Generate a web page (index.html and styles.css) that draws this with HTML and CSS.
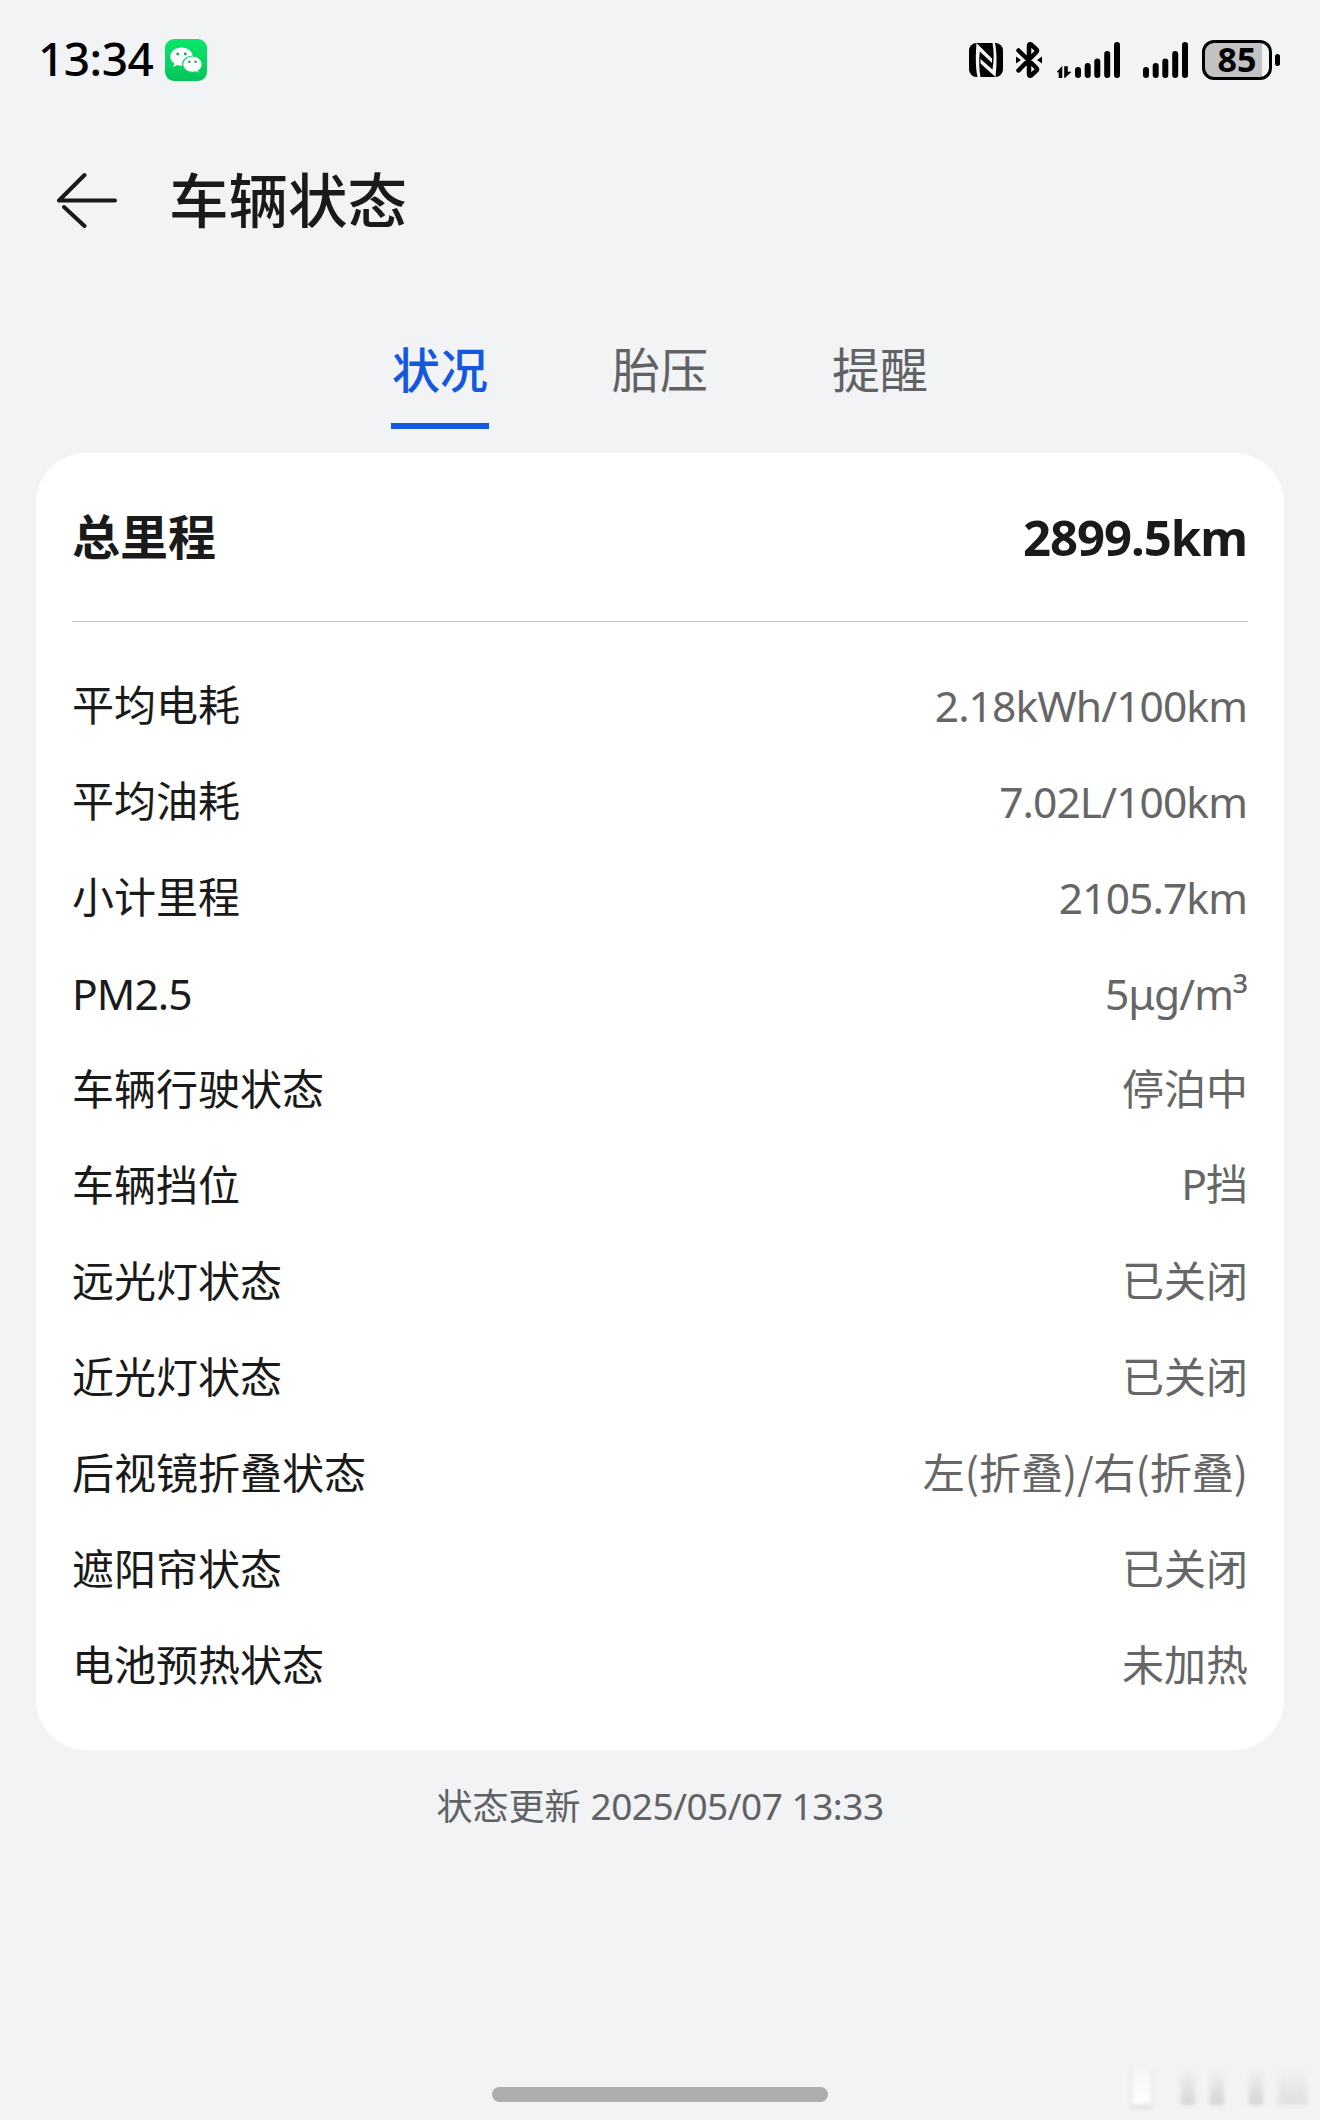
FILE: index.html
```html
<!DOCTYPE html>
<html lang="zh-CN">
<head>
  <meta charset="UTF-8">
  <meta name="viewport" content="width=device-width, initial-scale=1.0">
  <title>车辆状态</title>
  <link rel="stylesheet" href="styles.css">
</head>
<body>
  <div class="status-bar">
    <div class="clock">13:34</div>
    <svg class="wechat" viewBox="0 0 42 42">
      <defs>
        <linearGradient id="green" x1="0" y1="0" x2="0" y2="1">
          <stop offset="0" stop-color="#08e868"/>
          <stop offset="1" stop-color="#06c45a"/>
        </linearGradient>
      </defs>
      <rect width="42" height="42" rx="9" fill="url(#green)"/>
      <path d="M16.500 8.500c-6.300 0-11.200 4-11.200 9.100 0 2.900 1.500 5.300 4 7l-1.100 3.500 4-2c1.400.4 2.800.6 4.300.6 6.300 0 11.300-4 11.300-9.100s-5-9.100-11.300-9.100z" fill="#fff"/>
      <path d="M27.500 17c-5.400 0-9.900 3.700-9.900 8.200s4.500 8.200 9.900 8.200c1.200 0 2.400-.2 3.500-.5l3.400 1.900-.9-3c2.300-1.500 3.700-3.900 3.700-6.600 0-4.500-4.300-8.200-9.700-8.200z" fill="#fff" stroke="#0bd25e" stroke-width="1.200"/>
      <g fill="#10a957">
        <circle cx="12.700" cy="15" r="1.400"/>
        <circle cx="20.300" cy="15" r="1.400"/>
        <circle cx="24.300" cy="22.700" r="1.200"/>
        <circle cx="30.600" cy="22.700" r="1.200"/>
      </g>
    </svg>

    <div class="indicators">
      <svg class="nfc" viewBox="0 0 34 34">
        <rect width="34" height="34" rx="7.500"/>
        <g fill="#f1f3f5">
          <path d="M7.500 0L23 15.500V20L10.800 8.500C9.800 17 10 26 11.500 34H8.500C6.500 25 6.500 12 7.500 0z"/>
          <path d="M23.500 0H26C28 10 28 22 26.500 34L11.500 20.500V16L23.500 26.500C25 17 25 8 23.500 0z"/>
        </g>
      </svg>
      <svg class="bluetooth" viewBox="0 0 26 36">
        <path d="M2.500 8.500L20 25.500C21.500 27 21.500 28 20 29L15 33.500Q13 34.500 13 32V4Q13 1.500 15 2.500L20 7C21.500 8 21.500 9 20 10.500L2.500 28.500" fill="none" stroke="#000" stroke-width="4.500" stroke-linecap="round" stroke-linejoin="round"/>
        <path d="M0 14.500L5 18L0 21.500zM26 14.500L21 18L26 21.500z"/>
      </svg>
      <svg class="signal-data" viewBox="0 0 63 36">
        <path d="M0 30L5 24.500V36H2V30zM7.500 24.500H10.500V30H14L7.500 36z" stroke="#000" stroke-width="0.600"/>
        <rect x="18" y="25" width="6" height="11" rx="3"/>
        <rect x="27.700" y="21" width="6" height="15" rx="3"/>
        <rect x="37.300" y="16.500" width="6" height="19.500" rx="3"/>
        <rect x="47.200" y="9" width="6" height="27" rx="3"/>
        <rect x="57" y="0" width="6" height="36" rx="3"/>
      </svg>
      <svg class="signal" viewBox="0 0 45 36">
        <rect x="0" y="25" width="6" height="11" rx="3"/>
        <rect x="9.700" y="21" width="6" height="15" rx="3"/>
        <rect x="19.300" y="16.500" width="6" height="19.500" rx="3"/>
        <rect x="29.200" y="9" width="6" height="27" rx="3"/>
        <rect x="39" y="0" width="6" height="36" rx="3"/>
      </svg>
      <div class="battery"><span>85</span></div>
      <div class="battery-tip"></div>
    </div>
  </div>

  <div class="title-bar">
    <svg class="back" viewBox="0 0 62 56">
      <path d="M28.500 3L3 28.500H59M8 35L28.500 54" fill="none" stroke="#1a1a1a" stroke-width="4" stroke-linecap="round" stroke-linejoin="round"/>
    </svg>
    <h1>车辆状态</h1>
  </div>

  <div class="tabs">
    <div class="tab active">状况</div>
    <div class="tab">胎压</div>
    <div class="tab">提醒</div>
  </div>

  <div class="card">
    <div class="total">
      <div class="total-label">总里程</div>
      <div class="total-value">2899.5km</div>
    </div>
    <div class="row"><div>平均电耗</div><div class="num">2.18kWh/100km</div></div>
    <div class="row"><div>平均油耗</div><div class="num">7.02L/100km</div></div>
    <div class="row"><div>小计里程</div><div class="num">2105.7km</div></div>
    <div class="row"><div class="num">PM2.5</div><div class="num">5μg/m³</div></div>
    <div class="row"><div>车辆行驶状态</div><div>停泊中</div></div>
    <div class="row"><div>车辆挡位</div><div><span class="num">P</span>挡</div></div>
    <div class="row"><div>远光灯状态</div><div>已关闭</div></div>
    <div class="row"><div>近光灯状态</div><div>已关闭</div></div>
    <div class="row"><div>后视镜折叠状态</div><div>左(折叠)/右(折叠)</div></div>
    <div class="row"><div>遮阳帘状态</div><div>已关闭</div></div>
    <div class="row"><div>电池预热状态</div><div>未加热</div></div>
  </div>

  <div class="updated">状态更新 <span>2025/05/07 13:33</span></div>

  <div class="home-bar"></div>
  <div class="smudge">
    <i class="light"></i><i></i><i></i><i></i><i></i>
  </div>
</body>
</html>
```
FILE: styles.css
```css
* {
  box-sizing: border-box;
}

body {
  margin: 0;
  width: 1320px;
  height: 2120px;
  position: relative;
  overflow: hidden;
  background: #f1f3f5;
  color: #1a1a1a;
  font-family: "Noto Sans CJK SC", sans-serif;
}

.status-bar {
  display: flex;
  align-items: center;
  height: 119px;
  padding: 0 40px 0 38px;
}

.clock {
  width: 127px;
  padding-bottom: 3px;
  font: 500 46px/60px "Noto Sans", sans-serif;
  color: #000;
  letter-spacing: -0.5px;
}

.wechat {
  width: 42px;
  height: 42px;
}

.indicators {
  display: flex;
  align-items: center;
  margin-left: auto;
}

.nfc {
  width: 34px;
  height: 34px;
  margin-right: 13px;
}

.bluetooth {
  width: 26px;
  height: 36px;
  margin-right: 15px;
}

.signal-data {
  width: 63px;
  height: 36px;
  margin-right: 23px;
}

.signal {
  width: 45px;
  height: 36px;
  margin-right: 14px;
}

.battery {
  width: 70px;
  height: 40px;
  border: 3px solid #000;
  border-radius: 12px;
  background: linear-gradient(90deg, #c1c2c3 57px, #f1f3f5 57px);
  text-align: center;
  font: 700 34px/33px "Noto Sans", sans-serif;
  color: #000;
}

.battery-tip {
  width: 5px;
  height: 12px;
  margin-left: 3px;
  border-radius: 3px;
  background: #000;
}

.title-bar {
  display: flex;
  align-items: center;
  height: 162px;
  padding-left: 56px;
}

.back {
  width: 62px;
  height: 56px;
  margin-right: 51px;
}

h1 {
  margin: 0;
  padding-bottom: 7px;
  font-size: 59.5px;
  line-height: 80px;
  font-weight: 500;
}

.tabs {
  display: flex;
  justify-content: center;
  gap: 122px;
  height: 172px;
  padding-top: 52px;
}

.tab {
  width: 98px;
  height: 96px;
  line-height: 69px;
  font-size: 48px;
  text-align: center;
  color: #606264;
}

.tab.active {
  color: #1458e0;
  font-weight: 500;
  border-bottom: 6px solid #1458e0;
}

.card {
  margin: 0 36px;
  height: 1297px;
  padding: 0 36px;
  border-radius: 50px;
  background: #fff;
}

.total {
  display: flex;
  justify-content: space-between;
  align-items: center;
  height: 169px;
  margin-bottom: 36px;
  border-bottom: 1px solid #c6c6c6;
  font-size: 48px;
  font-weight: 700;
}

.total-label {
  padding-bottom: 6px;
}

.total-value {
  padding-right: 1px;
  font-family: "Noto Sans", sans-serif;
  font-size: 49px;
  letter-spacing: -1px;
}

.row {
  display: flex;
  justify-content: space-between;
  align-items: center;
  height: 96px;
  font-size: 42px;
  line-height: 60px;
}

.row > div {
  padding-bottom: 6px;
}

.row > div:last-child {
  color: #666;
}

.row .num {
  padding-bottom: 0;
  font-family: "Noto Sans", sans-serif;
  font-size: 42.5px;
  letter-spacing: -0.9px;
}

.row > .num:last-child {
  padding-right: 1px;
}

.updated {
  margin-top: 24px;
  text-align: center;
  font-size: 36px;
  line-height: 60px;
  color: #606264;
}

.updated span {
  margin-left: 2px;
  font-family: "Noto Sans", sans-serif;
  font-size: 37px;
  letter-spacing: -0.5px;
}

.home-bar {
  position: absolute;
  left: 492px;
  bottom: 18px;
  width: 336px;
  height: 15px;
  border-radius: 8px;
  background: #acadae;
}

/* faded marks in the bottom corner */
.smudge {
  position: absolute;
  right: 13px;
  bottom: 15px;
  display: flex;
  filter: blur(2px);
}

.smudge i {
  width: 14px;
  height: 38px;
  margin-right: 15px;
  background: linear-gradient(#f1f3f5, #d2d4d6);
}

.smudge i:nth-child(3) {
  margin-right: 25px;
}

.smudge i:last-child {
  width: 29px;
  margin-right: 0;
  background: linear-gradient(#f1f3f5, #dcdee0);
}

.smudge .light {
  width: 19px;
  margin-right: 30px;
  background: linear-gradient(#f4f5f6, #fff);
  box-shadow: 0 2px 3px rgba(0, 0, 0, 0.2);
}
```
